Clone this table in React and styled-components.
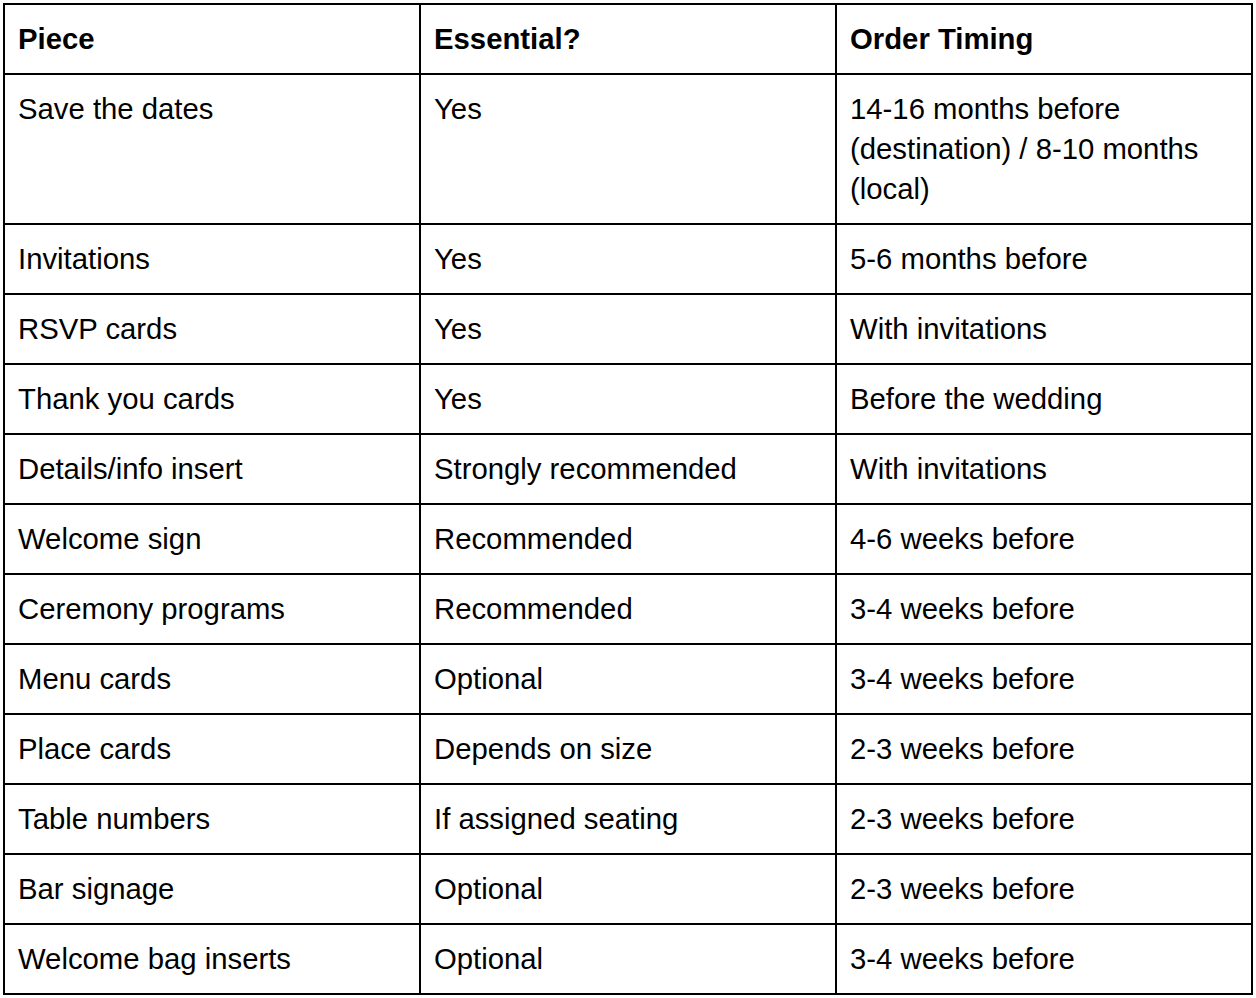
import React from 'react'
import styled, { createGlobalStyle } from 'styled-components'

const GlobalStyle = createGlobalStyle`
    body {
        margin:0;
        background:#fff;
        font-family:"Liberation Sans", Arial, sans-serif;
        color:#000;
    }
`

const Page = styled.div`
    padding:3px;
`

const Table = styled.table`
    width:1250px;
    table-layout:fixed;
    border-collapse:separate;
    border-spacing:0;
    border-top:2px solid #000;
    border-left:2px solid #000;
`

const Cell = styled.td`
    width:33.333%;
    padding:14px 13px;
    border-right:2px solid #000;
    border-bottom:2px solid #000;
    font-size:29.3px;
    line-height:40px;
    font-weight:${props => props.head ? 700 : 400};
    text-align:left;
    vertical-align:top;
`

const rows = [
    ['Save the dates', 'Yes', '14-16 months before (destination) / 8-10 months (local)'],
    ['Invitations', 'Yes', '5-6 months before'],
    ['RSVP cards', 'Yes', 'With invitations'],
    ['Thank you cards', 'Yes', 'Before the wedding'],
    ['Details/info insert', 'Strongly recommended', 'With invitations'],
    ['Welcome sign', 'Recommended', '4-6 weeks before'],
    ['Ceremony programs', 'Recommended', '3-4 weeks before'],
    ['Menu cards', 'Optional', '3-4 weeks before'],
    ['Place cards', 'Depends on size', '2-3 weeks before'],
    ['Table numbers', 'If assigned seating', '2-3 weeks before'],
    ['Bar signage', 'Optional', '2-3 weeks before'],
    ['Welcome bag inserts', 'Optional', '3-4 weeks before'],
]

export default function App() {
    return (
        <Page>
            <GlobalStyle />
            <Table>
                <thead>
                    <tr>
                        <Cell as="th" head>Piece</Cell>
                        <Cell as="th" head>Essential?</Cell>
                        <Cell as="th" head>Order Timing</Cell>
                    </tr>
                </thead>
                <tbody>
                    {rows.map((row) => (
                        <tr key={row[0]}>
                            {row.map((text, i) => (
                                <Cell key={i}>{text}</Cell>
                            ))}
                        </tr>
                    ))}
                </tbody>
            </Table>
        </Page>
    )
}
